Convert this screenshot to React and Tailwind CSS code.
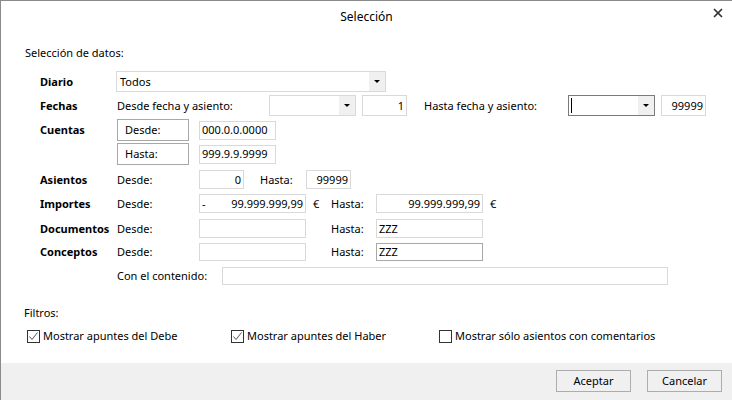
import { X } from "lucide-react";

function Field({ w, h = 19, align = "left", dark = false, children }) {
  return (
    <div
      className={`flex items-center shrink-0 bg-white border px-[2px] overflow-hidden whitespace-nowrap ${
        dark ? "border-[#a8a8a8]" : "border-[#d9d9d9]"
      } ${align === "right" ? "justify-end" : "justify-start"}`}
      style={{ width: w, height: h }}
    >
      {children}
    </div>
  );
}

function Select({ w, h = 21, focused = false, children }) {
  return (
    <div
      className={`flex shrink-0 bg-white border ${
        focused ? "border-[#7a7a7a]" : "border-[#d9d9d9]"
      }`}
      style={{ width: w, height: h }}
    >
      <div className="flex-1 flex items-center pl-[3px]">
        {focused ? <div className="w-px h-[15px] bg-black ml-[-1px]" /> : children}
      </div>
      <div className="w-[16px] flex items-center justify-center bg-[#f0f0f0]">
        <div className="w-0 h-0 border-l-[3px] border-r-[3px] border-t-[3px] border-l-transparent border-r-transparent border-t-black" />
      </div>
    </div>
  );
}

function Check({ checked, label }) {
  return (
    <div className="flex items-center">
      <div className="w-[13px] h-[13px] border border-[#333] bg-white flex items-center justify-center">
        {checked && (
          <svg width="11" height="11" viewBox="0 0 11 11">
            <path d="M1.5 5.5 L4 8.5 L9.5 1.5" fill="none" stroke="#555" strokeWidth="1" />
          </svg>
        )}
      </div>
      <span className="ml-[3px]">{label}</span>
    </div>
  );
}

function Label({ children }) {
  return <div className="w-[77px] shrink-0 font-bold">{children}</div>;
}

export default function App() {
  return (
    <div className="w-[732px] h-[400px] flex flex-col bg-white border-l border-t border-[#8a8a8a] text-[11px] leading-[14px] text-black font-['Noto_Sans','Open_Sans',sans-serif] overflow-hidden">
      <div className="h-[31px] shrink-0 relative flex items-center justify-center">
        <span className="text-[12px] mt-[1px]">Selección</span>
        <X className="absolute right-[7px] top-[5px]" size={14} strokeWidth={3} color="#333" />
      </div>

      <div className="pl-[24px] mt-[14px]">Selección de datos:</div>

      <div className="pl-[39px] flex flex-col">
        <div className="flex items-center h-[21px] mt-[11px]">
          <div className="w-[76px] shrink-0 font-bold">Diario</div>
          <Select w={270}>Todos</Select>
        </div>

        <div className="flex items-center h-[21px] mt-[3px]">
          <Label>Fechas</Label>
          <span className="w-[152px] shrink-0">Desde fecha y asiento:</span>
          <Select w={87} />
          <div className="ml-[6px]">
            <Field w={45} h={21} align="right">1</Field>
          </div>
          <span className="ml-[17px] w-[144px] shrink-0">Hasta fecha y asiento:</span>
          <Select w={87} focused />
          <div className="ml-[6px]">
            <Field w={45} h={21} align="right">99999</Field>
          </div>
        </div>

        <div className="flex mt-[3px]">
          <div className="w-[77px] shrink-0 font-bold h-[22px] flex items-center">Cuentas</div>
          <div className="flex flex-col gap-[2px]">
            <div className="flex items-center">
              <div className="w-[72px] h-[22px] border border-[#a8a8a8] flex items-center pl-[7px]">Desde:</div>
              <div className="ml-[10px]">
                <Field w={77}>000.0.0.0000</Field>
              </div>
            </div>
            <div className="flex items-center">
              <div className="w-[72px] h-[22px] border border-[#a8a8a8] flex items-center pl-[7px]">Hasta:</div>
              <div className="ml-[10px]">
                <Field w={77}>999.9.9.9999</Field>
              </div>
            </div>
          </div>
        </div>

        <div className="flex items-center h-[19px] mt-[5px]">
          <Label>Asientos</Label>
          <span className="w-[82px] shrink-0">Desde:</span>
          <Field w={45} align="right">0</Field>
          <span className="ml-[16px] w-[46px] shrink-0">Hasta:</span>
          <Field w={45} align="right">99999</Field>
        </div>

        <div className="flex items-center h-[19px] mt-[5px]">
          <Label>Importes</Label>
          <span className="w-[82px] shrink-0">Desde:</span>
          <Field w={107} align="right">
            <span className="mr-auto">-</span>
            <span>99.999.999,99</span>
          </Field>
          <span className="ml-[7px] w-[18px] shrink-0">€</span>
          <span className="w-[45px] shrink-0">Hasta:</span>
          <Field w={107} align="right">99.999.999,99</Field>
          <span className="ml-[7px]">€</span>
        </div>

        <div className="flex items-center h-[19px] mt-[6px]">
          <Label>Documentos</Label>
          <span className="w-[82px] shrink-0">Desde:</span>
          <Field w={107} />
          <span className="ml-[25px] w-[45px] shrink-0">Hasta:</span>
          <Field w={107}>ZZZ</Field>
        </div>

        <div className="flex items-center h-[18px] mt-[5px]">
          <Label>Conceptos</Label>
          <span className="w-[82px] shrink-0">Desde:</span>
          <Field w={107} h={18} />
          <span className="ml-[25px] w-[45px] shrink-0">Hasta:</span>
          <Field w={107} h={18} dark>ZZZ</Field>
        </div>

        <div className="flex items-center h-[18px] mt-[6px]">
          <div className="w-[77px] shrink-0" />
          <span className="w-[105px] shrink-0">Con el contenido:</span>
          <Field w={446} h={18} />
        </div>
      </div>

      <div className="pl-[23px] mt-[21px]">Filtros:</div>

      <div className="pl-[26px] mt-[9px] flex items-center h-[14px]">
        <div className="w-[204px] shrink-0">
          <Check checked label="Mostrar apuntes del Debe" />
        </div>
        <div className="w-[208px] shrink-0">
          <Check checked label="Mostrar apuntes del Haber" />
        </div>
        <Check label="Mostrar sólo asientos con comentarios" />
      </div>

      <div className="flex-1" />

      <div className="h-[37px] shrink-0 bg-[#f0f0f0] flex justify-end items-start pt-[7px] pr-[10px] gap-[16px]">
        <button className="w-[75px] h-[22px] border border-[#adadad] bg-[#f0f0f0] text-[11px]">Aceptar</button>
        <button className="w-[75px] h-[22px] border border-[#adadad] bg-[#f0f0f0] text-[11px]">Cancelar</button>
      </div>
    </div>
  );
}
